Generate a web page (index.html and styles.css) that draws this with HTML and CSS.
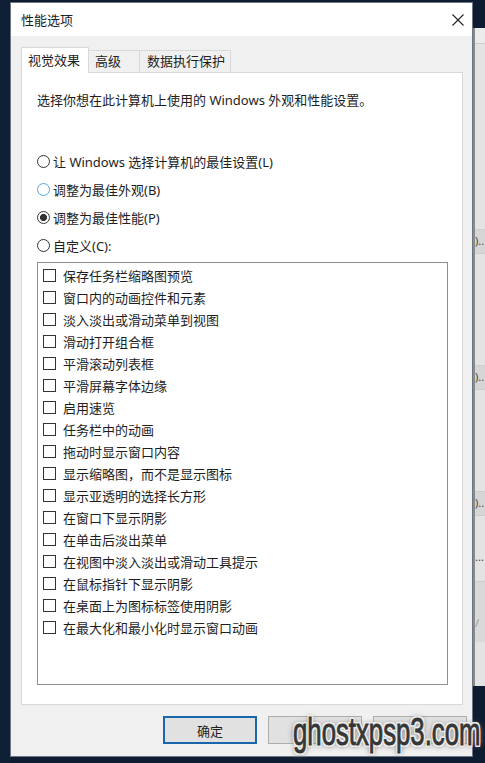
FILE: index.html
```html
<!DOCTYPE html>
<html lang="zh-CN">
<head>
<meta charset="utf-8">
<title>性能选项</title>
<link rel="stylesheet" href="styles.css">
</head>
<body>
<div class="desktop">
  <div class="edge-left"></div>

  <section class="dialog">
    <header class="titlebar">
      <span class="title">性能选项</span>
      <span class="close">
        <svg width="12" height="12" viewBox="0 0 12 12"><path d="M0.5 0.5L11.5 11.5M11.5 0.5L0.5 11.5" stroke="#222" stroke-width="1.1" fill="none"/></svg>
      </span>
    </header>

    <div class="body">
      <nav class="tabs">
        <span class="tab active">视觉效果</span>
        <span class="tab tab2">高级</span>
        <span class="tab tab3">数据执行保护</span>
      </nav>

      <div class="panel">
        <p class="desc">选择你想在此计算机上使用的 Windows 外观和性能设置。</p>

        <ul class="radios">
          <li><span class="radio"></span>让 Windows 选择计算机的最佳设置(L)</li>
          <li><span class="radio focus"></span>调整为最佳外观(B)</li>
          <li><span class="radio on"></span>调整为最佳性能(P)</li>
          <li><span class="radio"></span>自定义(C):</li>
        </ul>

        <ul class="options">
          <li><span class="box"></span>保存任务栏缩略图预览</li>
          <li><span class="box"></span>窗口内的动画控件和元素</li>
          <li><span class="box"></span>淡入淡出或滑动菜单到视图</li>
          <li><span class="box"></span>滑动打开组合框</li>
          <li><span class="box"></span>平滑滚动列表框</li>
          <li><span class="box"></span>平滑屏幕字体边缘</li>
          <li><span class="box"></span>启用速览</li>
          <li><span class="box"></span>任务栏中的动画</li>
          <li><span class="box"></span>拖动时显示窗口内容</li>
          <li><span class="box"></span>显示缩略图，而不是显示图标</li>
          <li><span class="box"></span>显示亚透明的选择长方形</li>
          <li><span class="box"></span>在窗口下显示阴影</li>
          <li><span class="box"></span>在单击后淡出菜单</li>
          <li><span class="box"></span>在视图中淡入淡出或滑动工具提示</li>
          <li><span class="box"></span>在鼠标指针下显示阴影</li>
          <li><span class="box"></span>在桌面上为图标标签使用阴影</li>
          <li><span class="box"></span>在最大化和最小化时显示窗口动画</li>
        </ul>
      </div>

      <div class="buttons">
        <button class="btn primary">确定</button>
        <button class="btn"></button>
        <button class="btn"></button>
      </div>
    </div>
  </section>

  <aside class="behind">
    <div class="behind-top"></div>
    <div class="behind-body">
      <div class="row r1"></div>
      <div class="row r2"></div>
      <div class="row r3"><span>)..</span></div>
      <div class="row r4"></div>
      <div class="row r5"><span>)..</span></div>
      <div class="row r6"></div>
      <div class="row r7"><span>)..</span></div>
      <div class="row r8"><span>...</span></div>
      <div class="row r9"><span>/</span></div>
    </div>
  </aside>

  <div class="watermark">ghostxpsp3.com</div>
</div>
</body>
</html>
```

FILE: styles.css
```css
* {
  box-sizing: border-box;
}

html,
body {
  margin: 0;
  padding: 0;
}

body {
  width: 485px;
  height: 763px;
  overflow: hidden;
  background: #0e1c31;
  font-family: "Noto Sans", "Noto Sans CJK SC", sans-serif;
  font-size: 13px;
  color: #1e1e1e;
}

.desktop {
  position: relative;
  display: grid;
  grid-template-columns: 10px 463px 12px;
  height: 763px;
}

.edge-left {
  background: #0f1f36;
}

/* dialog window */
.dialog {
  margin-top: 2px;
  height: 755px;
  display: flex;
  flex-direction: column;
  background: #f0f0f0;
  border: 1px solid #6d7784;
}

.titlebar {
  flex: none;
  height: 33px;
  background: #fff;
  display: flex;
  align-items: center;
  justify-content: space-between;
  padding-left: 10px;
}

.title {
  line-height: 34px;
}

.close {
  width: 28px;
  height: 33px;
  display: flex;
  align-items: center;
  justify-content: center;
}

.body {
  flex: 1;
  padding: 11px 9px 0 10px;
  display: flex;
  flex-direction: column;
}

/* tab strip */
.tabs {
  display: flex;
  height: 26px;
  margin-bottom: -1px;
}

.tab {
  height: 22px;
  margin-top: 3px;
  border: 1px solid #d9d9d9;
  border-bottom: none;
  background: #f0f0f0;
  line-height: 21px;
  white-space: nowrap;
}

.tab.active {
  position: relative;
  z-index: 1;
  width: 68px;
  height: 26px;
  margin-top: 0;
  padding-left: 6px;
  background: #fff;
  line-height: 25px;
}

.tab2 {
  width: 51px;
  border-left: none;
  padding-left: 6px;
}

.tab3 {
  width: 91px;
  border-left: none;
  padding-left: 7px;
}

/* tab page */
.panel {
  flex: none;
  height: 633px;
  background: #fff;
  border: 1px solid #d9d9d9;
  padding: 18px 14px 0 15px;
}

.desc {
  margin: 0;
  line-height: 18px;
}

.radios {
  list-style: none;
  margin: 38px 0 0;
  padding: 0;
}

.radios li {
  height: 28px;
  display: flex;
  align-items: center;
  white-space: nowrap;
}

.radio {
  flex: none;
  width: 13px;
  height: 13px;
  border-radius: 50%;
  border: 1px solid #333;
  background: #fff;
  margin-right: 3px;
}

.radio.focus {
  border-color: #5aa6d6;
}

.radio.on {
  background: radial-gradient(circle, #333 3.3px, #fff 3.8px);
}

.options {
  list-style: none;
  margin: 3px 0 0;
  height: 423px;
  border: 1px solid #8f8f8f;
  padding: 1px 0 0 5px;
}

.options li {
  height: 22px;
  display: flex;
  align-items: center;
  white-space: nowrap;
}

.box {
  flex: none;
  width: 13px;
  height: 13px;
  border: 1px solid #333;
  background: #fff;
  margin-right: 7px;
}

/* dialog buttons */
.buttons {
  display: flex;
  justify-content: flex-end;
  gap: 11px;
  margin-top: 11px;
  margin-right: -4px;
}

.btn {
  width: 94px;
  height: 28px;
  padding: 0;
  font: inherit;
  color: #1e1e1e;
  background: #e1e1e1;
  border: 1px solid #adadad;
}

.btn.primary {
  border: 2px solid #1a66ad;
}

/* window behind the dialog */
.behind {
  display: flex;
  flex-direction: column;
}

.behind-top {
  height: 28px;
  background: #0e1c31;
}

.behind-body {
  height: 658px;
  background: #e3e3e3;
  border-left: 2px solid #8a8a8a;
  display: flex;
  flex-direction: column;
}

.row {
  flex: none;
  border-bottom: 1px solid #cdcdcd;
  font-size: 11px;
  color: #444;
  line-height: 22px;
  overflow: hidden;
  white-space: nowrap;
}

.r1 { height: 16px; background: #ececec; }
.r2 { height: 186px; }
.r3 { height: 24px; background: #d6d6d6; }
.r4 { height: 112px; }
.r5 { height: 24px; background: #d6d6d6; }
.r6 { height: 102px; }
.r7 { height: 24px; background: #d6d6d6; }
.r8 { height: 66px; padding-top: 30px; }
.r9 { height: 60px; background: #d9d9d9; padding-top: 30px; color: #999; border-bottom: none; }

/* overlay caption in the lower right corner */
.watermark {
  position: absolute;
  left: 293px;
  top: 712px;
  font-family: "Liberation Sans", Arial, sans-serif;
  font-size: 39px;
  line-height: 1;
  color: #363636;
  -webkit-text-stroke: 0.9px #363636;
  white-space: nowrap;
  transform: scaleX(0.66);
  transform-origin: left top;
  text-shadow:
    2px 0 0 #ececec, -2px 0 0 #ececec, 0 2px 0 #ececec, 0 -2px 0 #ececec,
    2px 2px 0 #ececec, -2px -2px 0 #ececec, 2px -2px 0 #ececec, -2px 2px 0 #ececec,
    0 0 4px #7a7a7a, 0 1px 7px #7a7a7a, 0 0 9px #9a9a9a;
}
```
